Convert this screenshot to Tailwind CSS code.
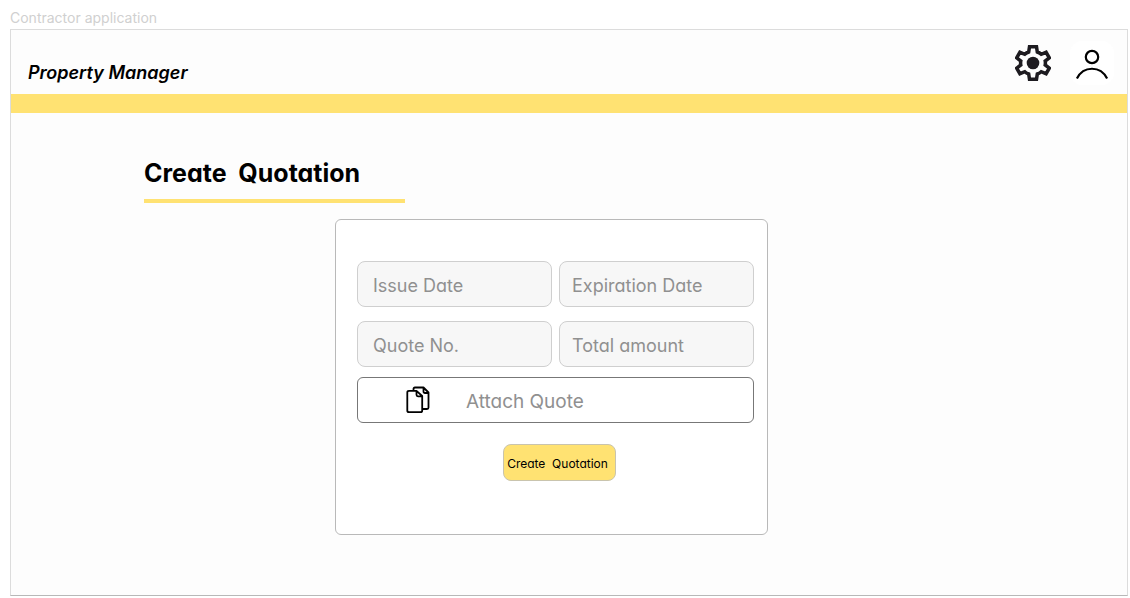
<!DOCTYPE html>
<html lang="en">
<head>
<meta charset="utf-8">
<meta name="viewport" content="width=device-width, initial-scale=1">
<title>Contractor application</title>
<script src="https://cdn.jsdelivr.net/npm/@tailwindcss/browser@4"></script>
</head>
<body class="flex min-h-screen flex-col bg-white pt-2 pr-0.5 pb-0.5 pl-2.5 font-['Inter',sans-serif] text-black">
<p class="mb-px text-sm leading-5 text-[#d0d0d0]">Contractor application</p>
<div class="flex grow flex-col border border-[#dcdcdc] border-b-[#b8b8b8] bg-[#fdfdfd]">
  <header class="flex h-16 items-center justify-between pr-[13px] pl-[17px]">
    <p class="pt-[21px] text-lg font-semibold italic">Property Manager</p>
    <div class="flex items-center gap-[17px] pt-0.5">
      <button type="button" aria-label="Settings" class="flex size-10 items-center justify-center">
        <svg class="size-9" viewBox="0 0 36 36" fill="none" aria-hidden="true">
          <path d="M14.500 1.800h7l.8 5.200q2.200.8 3.900 2.300l4.900-2 3.200 5.600-4.100 3.100q.4 2 0 4l4.100 3.100-3.200 5.600-4.900-2q-1.700 1.500-3.900 2.300l-.8 5.200h-7l-.8-5.200q-2.200-.8-3.900-2.300l-4.900 2-3.200-5.600 4.100-3.100q-.4-2 0-4l-4.100-3.100 3.200-5.600 4.900 2q1.700-1.500 3.900-2.300z" stroke="#1d1b20" stroke-width="3.500"/>
          <circle cx="18" cy="18" r="6.300" fill="#1d1b20"/>
        </svg>
      </button>
      <button type="button" aria-label="Profile" class="flex size-11 items-center justify-center rounded-xl bg-white">
        <svg class="size-11" viewBox="0 0 44 44" fill="none" stroke="black" stroke-width="2.200" aria-hidden="true">
          <circle cx="22" cy="16" r="6.200"/>
          <path d="M6.900 37.500C13.500 24.500 30.500 24.500 37.100 37.500"/>
        </svg>
      </button>
    </div>
  </header>
  <div class="h-[19px] bg-[#ffe272]"></div>
  <main class="flex flex-col pt-10">
    <h1 class="ml-[133px] w-[261px] border-b-4 border-[#ffe272] pb-1.5 text-[25px] leading-10 font-bold whitespace-pre [font-feature-settings:'cv11']">Create  Quotation</h1>
    <form class="mt-4 ml-[324px] flex min-h-[316px] w-full max-w-[433px] flex-col rounded-md border border-[#b9b9b9] bg-white pt-[41px] pr-[13px] pl-[21px] [font-feature-settings:'cv11']">
      <div class="grid grid-cols-2 gap-x-[7px] gap-y-3.5">
        <input aria-label="Issue Date" placeholder="Issue Date" class="h-[46px] min-w-0 rounded-lg border border-[#cfcfcf] bg-[#f7f7f7] px-[15px] pt-[3px] text-lg placeholder:text-[#909090]">
        <input aria-label="Expiration Date" placeholder="Expiration Date" class="h-[46px] min-w-0 rounded-lg border border-[#cfcfcf] bg-[#f7f7f7] px-3 pt-[3px] text-lg placeholder:text-[#909090]">
        <input aria-label="Quote No." placeholder="Quote No." class="h-[46px] min-w-0 rounded-lg border border-[#cfcfcf] bg-[#f7f7f7] px-[15px] pt-[3px] text-lg placeholder:text-[#909090]">
        <input aria-label="Total amount" placeholder="Total amount" class="h-[46px] min-w-0 rounded-lg border border-[#cfcfcf] bg-[#f7f7f7] px-3 pt-[3px] text-lg placeholder:text-[#909090]">
      </div>
      <button type="button" class="mt-2.5 flex h-[46px] items-center gap-9 rounded-md border border-[#777777] pl-12 text-[19px] text-[#909090]">
        <svg class="h-7 w-6" viewBox="0 0 24 28" fill="none" stroke="black" stroke-width="1.800" stroke-linejoin="round" aria-hidden="true">
          <path d="M7.500 4.500V3q0-1.500 1.500-1.500h8.500l5 5v15q0 1.500-1.500 1.500H17M17.500 1.500v4q0 1.500 1.500 1.500h4"/>
          <path d="M10.500 4.800H3Q1.300 4.800 1.300 6.500v18q0 1.700 1.700 1.700h11.500q1.700 0 1.700-1.700V10zM10.500 4.800v4q0 1.500 1.500 1.500h4.500"/>
        </svg>
        <span class="pt-1">Attach Quote</span>
      </button>
      <button type="submit" class="mt-[21px] ml-[146px] h-[37px] w-[113px] rounded-lg border border-[#c9c4ae] bg-[#ffe272] pt-0.5 pr-1 text-xs whitespace-pre">Create  Quotation</button>
    </form>
  </main>
</div>
</body>
</html>
